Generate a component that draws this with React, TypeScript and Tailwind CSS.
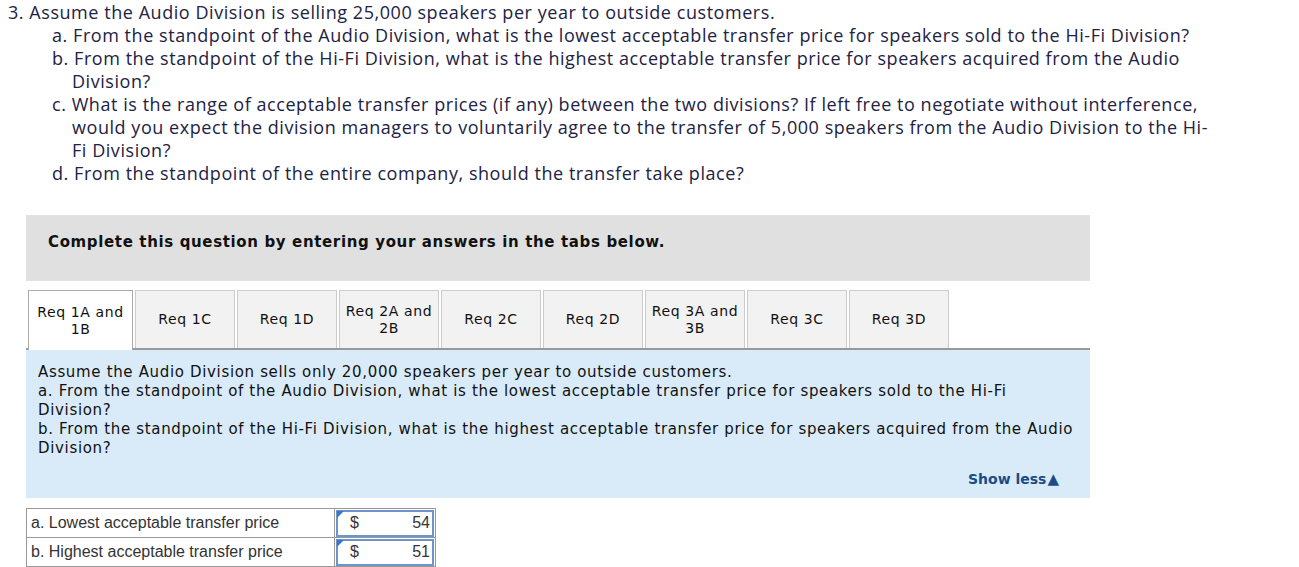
import React from 'react'

const tabs = [
  { id: '1ab', label: 'Req 1A and 1B', active: true },
  { id: '1c', label: 'Req 1C' },
  { id: '1d', label: 'Req 1D' },
  { id: '2ab', label: 'Req 2A and 2B' },
  { id: '2c', label: 'Req 2C' },
  { id: '2d', label: 'Req 2D' },
  { id: '3ab', label: 'Req 3A and 3B' },
  { id: '3c', label: 'Req 3C' },
  { id: '3d', label: 'Req 3D' },
]

// lines kept as in the source so the wraps land in the same places
const parts: string[][] = [
  ['a. From the standpoint of the Audio Division, what is the lowest acceptable transfer price for speakers sold to the Hi-Fi Division?'],
  ['b. From the standpoint of the Hi-Fi Division, what is the highest acceptable transfer price for speakers acquired from the Audio', 'Division?'],
  [
    'c. What is the range of acceptable transfer prices (if any) between the two divisions? If left free to negotiate without interference,',
    'would you expect the division managers to voluntarily agree to the transfer of 5,000 speakers from the Audio Division to the Hi-',
    'Fi Division?',
  ],
  ['d. From the standpoint of the entire company, should the transfer take place?'],
]

const answers = [
  { label: 'a. Lowest acceptable transfer price', value: '54' },
  { label: 'b. Highest acceptable transfer price', value: '51' },
]

const AnswerCell: React.FC<{ value: string }> = ({ value }) => (
  <td className="p-0 border border-[#999] w-[101px]">
    <div className="relative h-[27px] mx-[1px] border-2 border-[#6e94cc] bg-white flex items-center justify-between pl-[12px] pr-[2px]">
      <span className="absolute -left-[1px] -top-[1px] w-0 h-0 border-t-[7px] border-t-[#3d78c7] border-r-[7px] border-r-transparent" />
      <span>$</span>
      <span>{value}</span>
    </div>
  </td>
)

export default function App() {
  return (
    <div className="bg-white min-h-[567px] w-[1299px]">
      <div className="pl-2 pt-[1px] font-['Open_Sans',sans-serif] text-[18px] tracking-[0.55px] leading-[23px] text-[#222244] whitespace-nowrap">
        <p>3. Assume the Audio Division is selling 25,000 speakers per year to outside customers.</p>
        <div className="pl-[44px]">
          {parts.map((lines, i) => (
            <div key={i}>
              {lines.map((l, j) => (
                <p key={j} className={j === 0 ? '' : 'pl-[20px]'}>{l}</p>
              ))}
            </div>
          ))}
        </div>
      </div>

      <div className="ml-[26px] w-[1064px] mt-[30px] font-['DejaVu_Sans','Verdana',sans-serif]">
        <div className="h-[66px] bg-[#e0e0e0] pt-[17px] pl-[22px] text-[15px] leading-[20px] tracking-[0.64px] font-bold text-[#111]">
          Complete this question by entering your answers in the tabs below.
        </div>

        <div className="mt-[9px] flex items-end gap-[2px] pl-[2px] border-b-2 border-[#999] h-[60px] text-[14px] tracking-[0.6px] leading-[17px] text-[#111]">
          {tabs.map(t => (
            <div
              key={t.id}
              className={t.active
                ? 'w-[105px] h-[60px] -mb-[2px] bg-white border border-b-0 border-[#aaa] flex items-center justify-center text-center px-1'
                : 'w-[100px] h-[58px] bg-[#f2f2f2] border border-b-0 border-[#ccc] flex items-center justify-center text-center px-1'}
            >
              {t.label}
            </div>
          ))}
        </div>

        <div className="bg-[#d9ebf9] h-[148px] pt-[13px] pl-[12px] pr-[10px] text-[15px] tracking-[0.66px] leading-[19px] text-[#111] flex flex-col">
          <p>Assume the Audio Division sells only 20,000 speakers per year to outside customers.</p>
          <p>a. From the standpoint of the Audio Division, what is the lowest acceptable transfer price for speakers sold to the Hi-Fi Division?</p>
          <p>b. From the standpoint of the Hi-Fi Division, what is the highest acceptable transfer price for speakers acquired from the Audio Division?</p>
          <div className="mt-auto mb-[9px] flex justify-end pr-[21px]">
            <span className="text-[14px] tracking-normal font-bold text-[#1b4d85]">Show less<span className="text-[15px] ml-[1px]">▲</span></span>
          </div>
        </div>

        <table className="mt-[10px] border-collapse font-['Liberation_Sans','Arial',sans-serif] text-[16px] text-[#333]">
          <tbody>
            {answers.map(a => (
              <tr key={a.label} className="h-[29px]">
                <td className="border border-[#999] w-[308px] pl-[4px] py-0">{a.label}</td>
                <AnswerCell value={a.value} />
              </tr>
            ))}
          </tbody>
        </table>
      </div>
    </div>
  )
}
